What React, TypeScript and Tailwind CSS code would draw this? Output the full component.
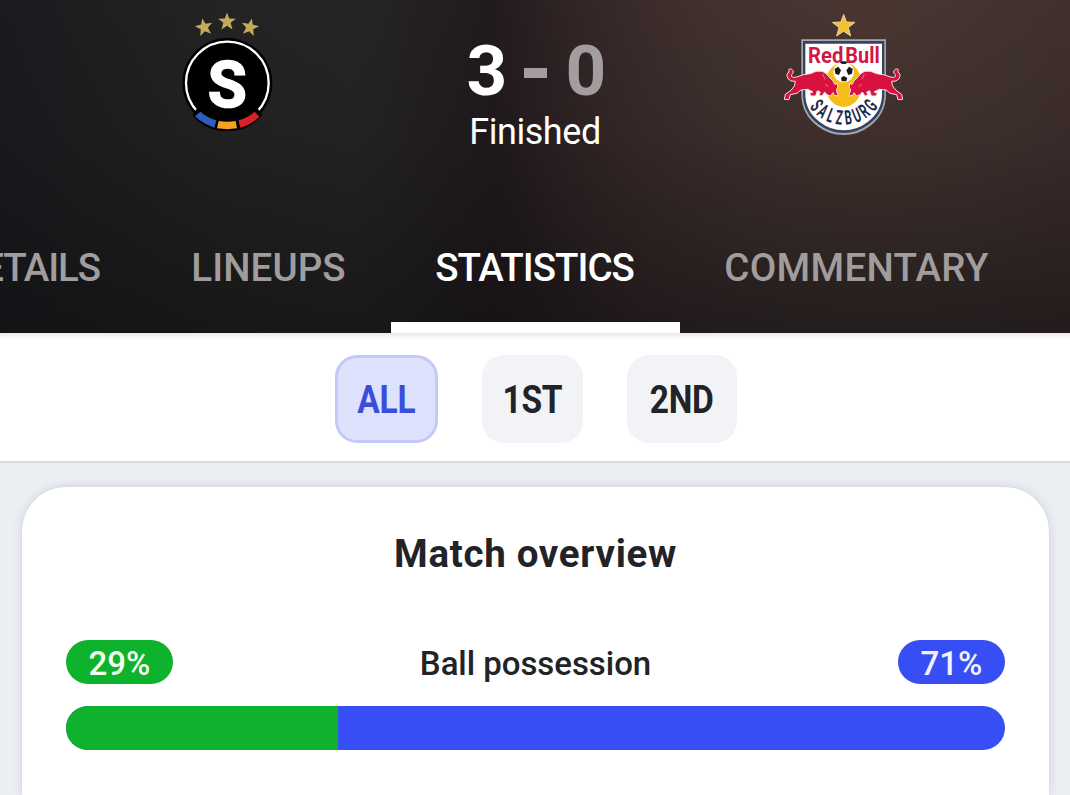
const TABS = [
  { label: "DETAILS", width: "w-[146px] justify-end pr-[46px]", tracking: "tracking-[-1.1px]" },
  { label: "LINEUPS", width: "w-[245px] justify-center", tracking: "tracking-[0.1px]" },
  { label: "STATISTICS", width: "w-[289px] justify-center pr-[2px]", tracking: "tracking-[-1px]" },
  { label: "COMMENTARY", width: "w-[353px] justify-center", tracking: "tracking-[0.3px]" },
];

const PERIODS = [
  { label: "ALL", width: "w-[103px]" },
  { label: "1ST", width: "w-[101px]" },
  { label: "2ND", width: "w-[110px]" },
];

const SALZBURG = "SALZBURG".split("");

const STAR = "0,-24 6,-8 24,-7 10,4 15,22 0,12 -15,22 -10,4 -24,-7 -6,-8";

function SpartaLogo() {
  return (
    <svg className="h-[145px] w-[115px] shrink-0" viewBox="0 0 345 435">
      <g fill="#c6aa5c">
        <polygon points={STAR} transform="translate(102 81) rotate(-12) scale(1.1)" />
        <polygon points={STAR} transform="translate(171 64) scale(1.1)" />
        <polygon points={STAR} transform="translate(240 81) rotate(12) scale(1.1)" />
      </g>
      <circle cx="172" cy="249" r="135" fill="#000" />
      <circle cx="172" cy="249" r="124" fill="none" stroke="#fff" strokeWidth="7" />
      <path d="M67 346 L80 326 H264 L276 346 Q236 394 172 394 Q106 394 67 346Z" fill="#000" />
      <path d="M91 335 A124 124 0 0 0 139 361 L133 383 Q98 371 75 349Z" fill="#2c5fbd" />
      <path d="M146 363 Q172 367 197 363 L201 385 Q172 390 141 385Z" fill="#f5a21f" />
      <path d="M205 361 Q234 353 254 335 L268 350 Q244 374 211 383Z" fill="#d92228" />
      <text
        transform="translate(172 320) scale(0.98 1)"
        textAnchor="middle"
        fontSize="194"
        fill="#fff"
        stroke="#fff"
        strokeWidth="5"
        strokeLinejoin="miter"
        className="font-[Roboto] font-bold"
      >
        S
      </text>
    </svg>
  );
}

function Bull() {
  return (
    <g fill="#d8123f" stroke="#f6dfe0" strokeWidth="3" strokeLinejoin="round">
      <path d="M61 244 Q46 246 39 236 Q31 221 43 216 Q36 206 49 207 Q61 216 50 224 Q47 235 64 231 Q86 222 106 221 Q124 210 142 214 Q156 220 163 232 Q176 242 180 254 L187 249 Q191 264 184 270 L190 288 L178 286 L174 278 L166 288 L156 284 L149 276 L141 288 L132 286 L136 276 L127 272 L122 288 L108 288 L104 280 L114 276 L98 268 L78 270 L66 280 L46 284 L42 299 L28 298 L31 283 L48 271 Q62 258 61 244Z" />
      <path d="M143 222 L150 238 M150 252 L160 260" fill="none" stroke="#f0a5b4" strokeWidth="2" />
    </g>
  );
}

function SalzburgLogo() {
  return (
    <svg className="h-[145px] w-[135px] shrink-0" viewBox="0 0 405 435">
      <polygon points={STAR} transform="translate(206 77) scale(1.4)" fill="#f4c32f" stroke="#e8d7b4" strokeWidth="2" />
      <path d="M79 118 H333 V283 Q333 342 285 378 Q250 405 206 405 Q162 405 127 378 Q79 342 79 283Z" fill="#a3a8b4" />
      <path d="M84 123 H328 V283 Q328 339 282 373 Q248 399 206 399 Q164 399 130 373 Q84 339 84 283Z" fill="#36435c" />
      <path d="M91 131 H321 V283 Q321 334 278 366 Q246 391 206 391 Q166 391 134 366 Q91 334 91 283Z" fill="#fff" />
      <ellipse cx="206" cy="254" rx="55" ry="67" fill="#f5bd18" />
      <g fill="#d01845" fontSize="66" className="font-[Roboto] font-bold">
        <text x="99" y="190" textLength="106" lengthAdjust="spacingAndGlyphs">
          Red
        </text>
        <text x="211" y="190" textLength="103" lengthAdjust="spacingAndGlyphs">
          Bull
        </text>
      </g>
      <circle cx="206" cy="216" r="31" fill="#fff" />
      <g fill="#171a22">
        <path d="M194 187 Q206 181 219 187 L211 192 H201Z" />
        <path d="M179 206 L190 200 L198 211 L192 225 L181 221Z" />
        <path d="M233 206 L222 200 L214 211 L220 225 L231 221Z" />
        <path d="M198 233 L206 228 L217 234 L214 244 H200Z" />
      </g>
      <Bull />
      <g transform="translate(411 0) scale(-1 1)">
        <Bull />
      </g>
      {SALZBURG.map((letter, i) => (
        <text
          key={i}
          transform={`translate(206 248) rotate(${50 - i * 14.3}) translate(0 126) scale(0.56 1)`}
          textAnchor="middle"
          fontSize="60"
          fill="#1c2947"
          className="font-[Roboto] font-bold"
        >
          {letter}
        </text>
      ))}
    </svg>
  );
}

function MatchHeader() {
  return (
    <header className="h-[333px] overflow-hidden bg-[radial-gradient(ellipse_380px_640px_at_870px_20px,#4a3631_0%,#433430e0_40%,#33282600_100%),linear-gradient(90deg,#191b1e_0%,#232323_20%,#262526_33%,#211a1d_46%,#2f2023_60%,#30272a_85%,#3a2628_100%)]">
      <div className="flex h-full flex-col bg-[linear-gradient(180deg,transparent_0%,#0c0c0e20_40%,#0c0c0e88_100%)]">
        <div className="flex h-[201px] items-start pr-[160px] pl-[170px]">
          <SpartaLogo />
          <div className="flex flex-1 flex-col items-center pt-[31px] pl-[10px] font-[Roboto] text-white">
            <div className="flex h-[80px] items-center text-[71px] leading-[80px] font-bold">
              <span className="w-[38px] text-center">3</span>
              <span className="mx-[19px] mt-[4px] h-[10px] w-[23px] overflow-hidden bg-[#a39da0] text-[8px] leading-[9px] text-transparent">-</span>
              <span className="w-[38px] text-center text-[#a39da0]">0</span>
            </div>
            <p className="text-[36px] leading-[42px] tracking-[-0.45px]">Finished</p>
          </div>
          <SalzburgLogo />
        </div>
        <nav className="flex h-[132px] font-[Roboto] text-[38.5px] font-medium">
          {TABS.map((tab) => (
            <div
              key={tab.label}
              className={`flex shrink-0 flex-col ${
                tab.label === "STATISTICS" ? "border-b-[11px] border-white text-white" : "text-[#a19d9d]"
              }`}
            >
              <span className={`flex h-[132px] pt-[44px] leading-[46px] whitespace-nowrap ${tab.width} ${tab.tracking}`}>
                {tab.label}
              </span>
            </div>
          ))}
        </nav>
      </div>
    </header>
  );
}

function PeriodFilter() {
  return (
    <div className="flex h-[130px] items-start justify-center gap-[44px] border-b-2 border-[#d8dadd] bg-white pt-[22px] pl-[2px] shadow-[inset_0_8px_6px_-6px_#00000020]">
      {PERIODS.map((period) => (
        <button
          key={period.label}
          className={`flex h-[88px] items-center justify-center rounded-[22px] pt-[2px] font-[Roboto] text-[38.5px] font-bold ${period.width} ${
            period.label === "ALL"
              ? "border-[3px] border-[#c5c9f7] bg-[#dfe2fd] text-[#3b4edb]"
              : "bg-[#f2f3f7] text-[#222327]"
          }`}
        >
          <span className="scale-x-[0.87] tracking-[-0.3px]">{period.label}</span>
        </button>
      ))}
    </div>
  );
}

function PossessionRow({ home, away }: { home: number; away: number }) {
  return (
    <div className="font-[Roboto] text-[33px] font-medium">
      <div className="flex h-[44px] items-center justify-between">
        <span className="flex h-[44px] w-[107px] items-center justify-center rounded-full bg-[#0fb22c] pt-[3px] text-[#f2fff0]">{home}%</span>
        <span className="pt-[3px] tracking-[-0.05px] text-[#222327]">Ball possession</span>
        <span className="flex h-[44px] w-[107px] items-center justify-center rounded-full bg-[#374ef5] pt-[3px] text-[#f0f3ff]">{away}%</span>
      </div>
      <div className="mt-[22px] flex h-[44px] overflow-hidden rounded-full bg-[#374ef5]">
        <div className="bg-[#0fb22c]" style={{ width: `${home}%` }} />
      </div>
    </div>
  );
}

export default function App() {
  return (
    <div className="flex h-[795px] w-[1070px] flex-col overflow-hidden bg-[#ebeff4]">
      <MatchHeader />
      <PeriodFilter />
      <main className="flex flex-1 flex-col pt-[24px] pr-[21px] pl-[22px]">
        <section className="flex-1 rounded-t-[44px] bg-white px-[44px] shadow-[0_0_12px_#0000001c,0_0_2px_#00000018]">
          <h2 className="pt-[44px] text-center font-[Roboto] text-[38.5px] leading-[46px] font-bold tracking-[0.7px] text-[#222327]">
            Match overview
          </h2>
          <div className="pt-[63px]">
            <PossessionRow home={29} away={71} />
          </div>
        </section>
      </main>
    </div>
  );
}
